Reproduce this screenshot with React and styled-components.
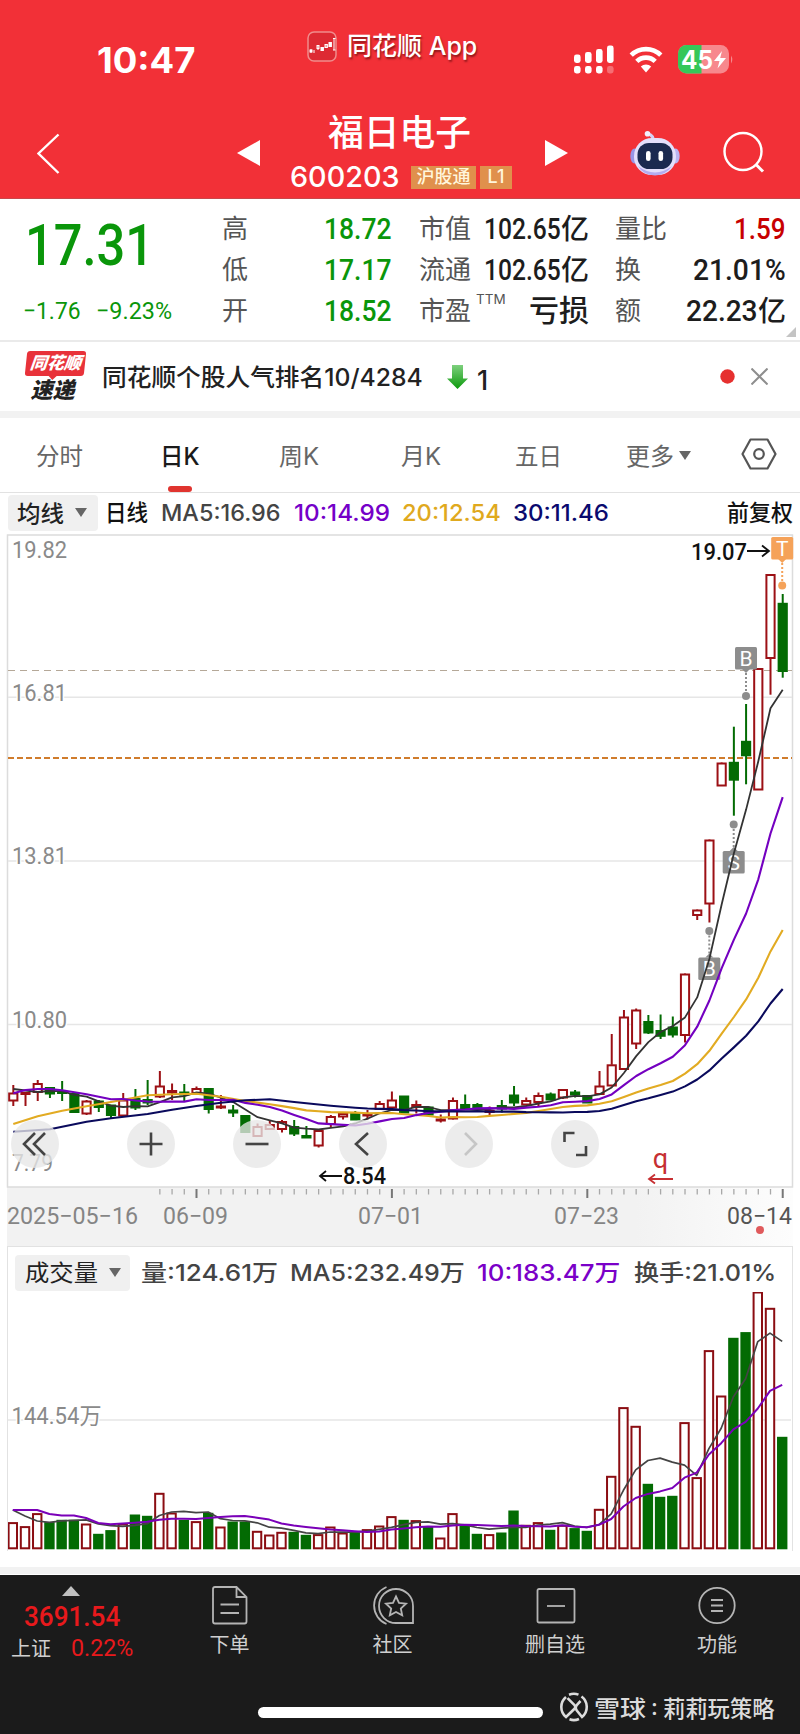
import React, { useLayoutEffect, useRef } from 'react'
import styled, { createGlobalStyle } from 'styled-components';

const CJK = `"Noto Sans CJK SC", sans-serif`;

const GlobalStyle = createGlobalStyle`
    * { box-sizing: border-box; }
    body {
        margin: 0;
        background: #fff;
        font-family: Inter, ${CJK};
    }
    svg { display: block; }
`

/* ---------- text that is squeezed to a set width, like the DIN digits ---------- */

const FitBox = styled.span`
    display: inline-block;
    width: ${p => p.$w}px;
    white-space: nowrap;
    text-align: left;
`
const FitInner = styled.span`
    display: inline-block;
    transform-origin: 0 50%;
`

function Fit({ w, children }) {
    const ref = useRef(null);
    useLayoutEffect(() => {
        ref.current.style.transform = `scaleX(${w / ref.current.offsetWidth})`;
    }, [w]);
    return <FitBox $w={w}><FitInner ref={ref}>{children}</FitInner></FitBox>
}

/* ---------- header ---------- */

const Header = styled.header`
    height: 199px;
    background: #f23037;
    border-bottom: 1px solid #c9474b;
    color: #fff;
`
const StatusBar = styled.div`
    display: grid;
    grid-template-columns: 97px 210px 267px 55px 49px 1fr;
    height: 112px;
    padding-top: 28px;
`
const Clock = styled.div`
    grid-column: 2;
    font-size: 35px;
    font-weight: 700;
    line-height: 64px;
`
const AppName = styled.div`
    display: flex;
    gap: 10px;
    height: 37px;
    align-items: center;
    font-size: 25px;
    font-weight: 500;
    line-height: 37px;
    text-shadow: 1px 2px 2px rgba(60, 0, 0, 0.55);
`
const Status = styled.div`
    padding-top: 17px;
`
const TitleBar = styled.div`
    display: grid;
    grid-template-columns: 37px 200px 53px 222px 33px 85px 49px 44px 1fr;
    height: 86px;
`
const BarItem = styled.div`
    grid-column: ${p => p.$col};
    padding-top: ${p => p.$top}px;
`
const StockName = styled.div`
    height: 43px;
    line-height: 43px;
    font-size: 36px;
    font-weight: 500;
    text-align: center;
    padding-right: 4px;
`
const StockCode = styled.div`
    display: flex;
    align-items: center;
    height: 43px;
    font-size: 29px;
    font-weight: 500;
    line-height: 43px;
`
const Badge = styled.span`
    display: flex;
    justify-content: center;
    width: ${p => p.$w}px;
    height: 23px;
    margin-left: ${p => p.$ml}px;
    margin-top: 2px;
    background: #e0904c;
    color: #fff6dc;
    font: 500 18px/22px Inter, ${CJK};
`

/* ---------- quote ---------- */

const Quote = styled.section`
    display: grid;
    grid-template-columns: 23px 199px 170px 27px 170px 26px 171px 14px;
    height: 143px;
    border-bottom: 2px solid #eaeaea;
    position: relative;
`
const PriceBox = styled.div`
    grid-column: 2;
    color: #0a960a;
    font-family: Roboto, ${CJK};
    font-weight: 500;
`
const Price = styled.div`
    font-size: 58px;
    line-height: 60px;
    height: 68px;
    padding: 16px 0 0 2px;
`
const Change = styled.div`
    display: flex;
    gap: 15px;
    margin-top: 27px;
    font-size: 24px;
    line-height: 34px;
    font-weight: 450;
`
const Column = styled.div`
    grid-column: ${p => p.$col};
    padding-top: 9px;
`
const Line = styled.div`
    display: flex;
    justify-content: space-between;
    height: 41px;
    line-height: 41px;
    font-size: 26px;
    color: #555;
`
const Label = styled.span`
    display: flex;
    sup {
        font-size: 13.5px;
        line-height: 18px;
        margin: 0 0 0 5px;
    }
`
const Value = styled.span`
    font: 500 ${p => p.$size || 30}px/41px Roboto, ${CJK};
    color: ${p => p.$color || '#1d1d1d'};
    i {
        font-style: normal;
        font-size: 28px;
    }
`
const Corner = styled.i`
    position: absolute;
    right: 4px;
    bottom: 3px;
    border-left: 10px solid transparent;
    border-bottom: 10px solid #c4c4c4;
`

/* ---------- news strip ---------- */

const News = styled.section`
    display: grid;
    grid-template-columns: 24px 78px 345px 30px 243px 31px 1fr;
    align-items: center;
    height: 76px;
    border-bottom: 7px solid #f2f2f2;
    font-size: 24px;
    color: #222;
`
const Headline = styled.div`
    padding-bottom: 3px;
    font-weight: 450;
`
const Rank = styled.span`
    padding-top: 7px;
    font-size: 27px;
    font-weight: 500;
`
const Logo = styled.div`
    grid-column: 2;
    width: 61px;
    text-align: center;
    font-weight: 900;
    font-style: italic;
    line-height: 26px;
`
const LogoTop = styled.div`
    height: 25px;
    margin-left: 2px;
    background: #e8323a;
    border-radius: 3px;
    transform: skewX(-6deg);
    color: #fff;
    font-size: 17px;
    line-height: 24px;
    position: relative;
    &:after {
        content: '';
        position: absolute;
        left: 24px;
        top: 25px;
        border: 4px solid transparent;
        border-top-color: #e8323a;
    }
`
const LogoBottom = styled.div`
    color: #222;
    font-size: 22px;
    line-height: 28px;
    height: 26px;
    padding-right: 4px;
`

/* ---------- tabs ---------- */

const Tabs = styled.nav`
    display: grid;
    grid-template-columns: 36px 124px 119px 122px 114px 111px 115px 1fr;
    height: 75px;
    border-bottom: 1px solid #e2e2e2;
`
const Tab = styled.div`
    display: flex;
    align-items: center;
    position: relative;
    grid-column: ${p => p.$col};
    padding-bottom: 2px;
    font-size: 24px;
    font-weight: ${p => p.$active ? 500 : 400};
    color: ${p => p.$active ? '#1a1a1a' : '#666'};
    &:after {
        content: '';
        display: ${p => p.$active ? 'block' : 'none'};
        position: absolute;
        left: 8px;
        bottom: 0;
        width: 24px;
        height: 6px;
        border-radius: 3px;
        background: #e0342f;
    }
`
const Caret = styled.i`
    border: ${p => p.$s || 6}px solid transparent;
    border-top: 9px solid #666;
    border-bottom: 0;
    margin-left: ${p => p.$ml || 0}px;
    margin-top: 2px;
`

/* ---------- indicator rows ---------- */

const Indicators = styled.div`
    display: flex;
    align-items: center;
    height: 41px;
    padding: 0 0 1px 8px;
    font-size: 23px;
    font-weight: 500;
`
const Select = styled.div`
    display: flex;
    align-items: center;
    width: ${p => p.$w}px;
    height: 36px;
    padding: 0 0 3px ${p => p.$pl}px;
    background: #f0f0f0;
    border-radius: 4px;
    color: #222;
    font-size: 23px;
`
const Ind = styled.span`
    margin-left: ${p => p.$ml}px;
    color: ${p => p.$color || '#444'};
    font-weight: ${p => p.$bold ? 500 : 450};
    line-height: 34px;
`

/* ---------- charts ---------- */

const KChart = styled.section`
    position: relative;
    height: 712px;
`
const AxisText = styled.text`
    font: ${p => p.$weight || 400} ${p => p.$size || 23}px Roboto, ${CJK};
    fill: ${p => p.$color || '#8a8a8a'};
`
const Controls = styled.div`
    position: absolute;
    left: 11px;
    top: 586px;
    display: flex;
    gap: 58px;
`
const Round = styled.button`
    width: 48px;
    height: 48px;
    padding: 0;
    border: 0;
    border-radius: 50%;
    background: rgba(231, 231, 231, 0.78);
    &:first-child { margin-right: 10px; }
    path {
        fill: none;
        stroke: ${p => p.$off ? '#c6c6c6' : '#444'};
        stroke-width: 2.6;
    }
`
const VolumePanel = styled.section`
    height: 321px;
    margin: 0 7px;
`
const VolumeFrame = styled.div`
    height: 305px;
    border: 1.5px solid #e2e2e2;
    border-bottom: 0;
`
const VolumeHead = styled.div`
    display: flex;
    align-items: center;
    height: 45px;
    padding: 6px 0 0 7px;
    font-size: 23px;
`

/* ---------- bottom bar ---------- */

const Strip = styled.div`
    height: 8px;
    background: #f2f2f2;
    border-bottom: 1px solid #fff;
`
const Bottom = styled.footer`
    height: 159px;
    background: #1b1b1b;
    color: #d0d0d0;
`
const Nav = styled.div`
    display: grid;
    grid-template-columns: 150px 159px 167px 158px 166px;
    height: 110px;
`
const NavItem = styled.div`
    display: flex;
    flex-direction: column;
    align-items: center;
    padding-top: 10px;
    font-size: 20px;
    line-height: 30px;
    svg { margin-bottom: 4px; }
`
const Index = styled.div`
    padding: 11px 0 0 11px;
    color: #e8191c;
    font-family: Roboto, ${CJK};
    font-weight: 500;
`
const IndexValue = styled.div`
    padding-left: 13px;
    font-size: 28px;
    line-height: 41px;
    height: 40px;
`
const IndexRow = styled.div`
    display: flex;
    gap: 20px;
    align-items: center;
    height: 24px;
    font-size: 24px;
    font-weight: 400;
    b {
        font: 400 20px/24px ${CJK};
        color: #d0d0d0;
    }
`
const UpMark = styled.div`
    width: 0;
    margin-left: 51px;
    border: 9px solid transparent;
    border-bottom: 10px solid #c0c0c0;
    border-top: 0;
`
const Foot = styled.div`
    display: flex;
    align-items: center;
    height: 40px;
    padding-left: 258px;
    font-size: 22.5px;
    font-weight: 500;
    color: #dcdcdc;
`
const HomeBar = styled.div`
    width: 285px;
    height: 11px;
    margin-right: 16px;
    margin-top: 15px;
    border-radius: 6px;
    background: #fff;
`
const Mark = styled.div`
    display: flex;
    align-items: center;
    gap: 5px;
    padding-top: 3px;
`

/* ---------- data ---------- */

const STEP = 12.213;
const X0 = 13.3;
const px = i => X0 + STEP * i;

// up, high, low, body top, body bottom, volume (all in chart pixels)
const days = [
    [1, 555, 576, 563, 570.5, 26.7],
    [1, 562, 576, 562.5, 564, 22.7],
    [1, 550, 571, 553.5, 562, 35.7],
    [0, 557, 568, 557.5, 563.5, 26.7],
    [0, 551, 571, 561.5, 563, 29],
    [0, 563, 582, 563.5, 582, 29],
    [1, 570, 585, 571, 583.5, 25.3],
    [0, 570, 582, 571, 577, 15],
    [0, 575, 588.5, 575, 585, 18.7],
    [1, 563, 586.5, 570, 585.5, 25.3],
    [0, 559, 580, 568.5, 577.5, 34.3],
    [0, 550, 575, 569.5, 572.5, 33],
    [1, 541, 568, 556, 566.5, 56],
    [1, 553.5, 570, 560.5, 562.5, 36.3],
    [0, 554, 571.5, 562, 564.5, 29],
    [1, 556.5, 563.5, 558.5, 563, 27.7],
    [0, 558, 583.5, 558.5, 579, 36],
    [1, 565, 579, 576, 577.5, 22.3],
    [0, 575, 587, 580, 582.5, 27.3],
    [0, 585.5, 603, 585.5, 602, 27.3],
    [1, 593.5, 606.5, 596.5, 606, 18],
    [1, 590.5, 600, 594.5, 599, 14.3],
    [1, 590, 602.5, 591.5, 599, 17],
    [0, 590, 606, 596.5, 603.5, 17],
    [0, 596, 608, 605.5, 607.5, 14],
    [1, 599, 617.5, 600.5, 615.5, 14.7],
    [1, 585, 597.5, 586.5, 594, 22.3],
    [1, 582.5, 589.5, 583.5, 586.5, 16.3],
    [0, 581, 589.5, 583.5, 589.5, 16.7],
    [1, 580, 589.5, 583.5, 585.5, 19.7],
    [1, 571, 580, 573.5, 579, 23.3],
    [1, 561.5, 579.5, 570, 577.5, 32.7],
    [0, 566, 582.5, 566, 582.5, 29],
    [1, 570.5, 583.5, 574.5, 577, 28.7],
    [0, 576.5, 584.5, 577, 584.5, 22.3],
    [1, 584.5, 592.5, 589, 590.5, 11.3],
    [1, 567.5, 589.5, 570.5, 588.5, 35.7],
    [0, 564.5, 580, 574.5, 578, 23],
    [0, 573, 580, 574.5, 578, 15],
    [1, 576.5, 585.5, 580.5, 582, 14.7],
    [0, 570, 582.5, 575.5, 578.5, 16.3],
    [0, 556, 576, 565, 572.5, 38.3],
    [1, 567.5, 575.5, 570.5, 574.5, 24],
    [1, 562.5, 576, 565.5, 572, 26.7],
    [0, 562.5, 570.5, 564, 569.5, 19],
    [1, 559, 569, 559.5, 567.5, 24],
    [0, 560, 567.5, 562, 564.5, 20.7],
    [0, 565.5, 573, 565.5, 572.5, 18],
    [1, 541, 565, 556, 564, 40],
    [1, 504, 556.5, 534.8, 555.5, 73],
    [1, 480, 540, 487, 539, 141.7],
    [1, 478.5, 519, 480, 513.5, 123],
    [0, 485, 504, 491.5, 502.5, 65],
    [0, 484.5, 509, 500.5, 505.8, 52],
    [0, 486.5, 507.5, 497, 504.5, 53],
    [1, 443.5, 512.5, 444, 505, 126.7],
    [1, 379.5, 390, 380, 385, 71.7],
    [1, 309.5, 392.5, 310, 373.5, 198.7],
    [1, 232.5, 256, 233, 255.5, 153.3],
    [0, 196.7, 285.7, 232.3, 249.7, 211],
    [0, 174, 254.3, 211.3, 225.3, 216.7],
    [1, 138, 260, 138.5, 259.5, 257.3],
    [1, 44, 164.7, 44.5, 128, 241],
    [0, 64, 147.7, 73.3, 141, 112],
];

const closes = days.map(d => d[0] ? d[3] : d[4]);
const volumes = days.map(d => 303 - d[5]);

// the first points come from before the visible range, the rest are averages
function average(values, n, lead) {
    const pts = lead.map(([i, y]) => [px(i), y]);
    for (let i = n - 1; i < values.length; i++) {
        let sum = 0;
        for (let k = 0; k < n; k++) sum += values[i - k];
        pts.push([px(i), sum / n]);
    }
    return pts.map(p => p[0].toFixed(1) + ',' + p[1].toFixed(1)).join(' ');
}

const seq = list => list.map((y, i) => [i, y]);

const ma5 = average(closes, 5, seq([559, 560.5, 562, 561]));
const ma10 = average(closes, 10, seq([563.3, 560, 559, 559, 560.3, 562.3, 564.3, 566.7, 569.3]));
const ma20 = average(closes, 20, [[0, 594], [2, 586.3], [4, 580.7], [6, 576.3], [8, 572], [11, 565.3], [13, 564.3], [15, 563.7], [17, 566.7]]);
const ma30 = average(closes, 30, [[0, 601.7], [3, 599.3], [6, 591.7], [8, 588.3], [11, 584], [13, 579.7], [15, 576], [17, 572.7], [19, 570.3], [21, 569.3], [23, 572], [26, 575.7], [28, 577.7]]);
const vol5 = average(volumes, 5, seq([264, 270, 275, 276.3]));
const vol10 = average(volumes, 10, seq([264, 264, 264, 268, 269.5, 269.5, 272, 277, 278.3]));

const RED = '#8b0d12';
const GREEN = '#036b03';

function Candle({ i, day }) {
    const [up, high, low, top, bottom] = day;
    const x = px(i);
    const color = up ? '#9c1015' : GREEN;
    return (
        <g stroke={color} strokeWidth="2">
            {high < top && <path d={`M${x} ${high}V${top}`} />}
            {low > bottom && <path d={`M${x} ${bottom}V${low}`} />}
            <rect x={x - 4.1} y={top + 0.5} width="8.2" height={Math.max(bottom - top - 0.5, 1)} fill={up ? '#fff' : color} />
        </g>
    )
}

function Marker({ x, y, dot, letter, color = '#8d8d8d' }) {
    const from = dot > y ? y + 22 : y;
    return (
        <g>
            <path d={`M${x} ${from}V${dot}`} stroke={color} strokeWidth="2" strokeDasharray="2 2" />
            <circle cx={x} cy={dot} r="4" fill={color} />
            <rect x={x - 11} y={y} width="22" height="22.5" rx="1.5" fill={color} />
            <path d={dot > y ? `M${x - 4} ${y + 22}h8l-4 4z` : `M${x - 4} ${y}h8l-4 -4z`} fill={color} />
            <AxisText x={x} y={y + 18.5} $size={21} $color="#fff" textAnchor="middle">{letter}</AxisText>
        </g>
    )
}

const prices = [['19.82', 27.5], ['16.81', 170.5], ['13.81', 334], ['10.80', 497.5], ['7.79', 641]];
const dates = [['2025-05-16', 7, 131], ['06-09', 163, 65], ['07-01', 358, 65], ['07-23', 554, 65], ['08-14', 727, 65]];

function CandleChart() {
    return (
        <svg width="800" height="712" viewBox="0 4 800 712">
            <defs>
                <linearGradient id="fade">
                    <stop offset="0.8" stopColor="#f2f2f2" />
                    <stop offset="1" stopColor="#fdfdfd" />
                </linearGradient>
            </defs>
            <rect x="7" y="657" width="786" height="59" fill="url(#fade)" />
            <path d="M7.5 657V5H792.5V657Z" fill="#fff" stroke="#dcdcdc" strokeWidth="1.5" />
            <path d="M8 167.3H792M8 331H792M8 494.5H792" stroke="#e6e6e6" strokeWidth="1.5" />
            <path d="M8 140.5H792" stroke="#b5a898" strokeWidth="1.2" strokeDasharray="7 5" />
            <path d="M8 228H792" stroke="#d07c2c" strokeWidth="2" strokeDasharray="6 3" />
            {prices.map(([t, y]) => (
                <AxisText key={t} x="12" y={y} textLength={t.length === 5 ? 55 : 41} lengthAdjust="spacingAndGlyphs"
                    stroke="#fff" strokeWidth="3" paintOrder="stroke">{t}</AxisText>
            ))}
            {days.map((d, i) => <Candle key={i} i={i} day={d} />)}
            <Marker x={746} y={117} dot={166} letter="B" />
            <Marker x={733.7} y={321} dot={294.5} letter="S" />
            <Marker x={709.3} y={427.5} dot={401} letter="B" />
            <Marker x={782.2} y={7} dot={55.5} letter="T" color="#f5a259" />
            <g fill="none" strokeWidth="2.1" strokeLinejoin="round">
                <polyline points={ma5} stroke="#333" strokeWidth="1.8" />
                <polyline points={ma20} stroke="#e2ab22" />
                <polyline points={ma10} stroke="#7400c0" />
                <polyline points={ma30} stroke="#0a0a5c" />
            </g>
            <AxisText x="691" y="30" $color="#111" $weight={500} textLength="56" lengthAdjust="spacingAndGlyphs">19.07</AxisText>
            <path d="M747 21H769M762 15.5L769 21L762 26.5" fill="none" stroke="#111" strokeWidth="1.8" />
            <AxisText x="343" y="654" $color="#111" $weight={500} textLength="43" lengthAdjust="spacingAndGlyphs">8.54</AxisText>
            <path d="M342 646H320M326 641L320 646L326 651" fill="none" stroke="#111" strokeWidth="1.8" />
            <AxisText x="660.5" y="638" $size={27} $color="#c62f32" textAnchor="middle">q</AxisText>
            <path d="M673 649H649M655 644.5L649 649L655 653.5" fill="none" stroke="#c62f32" strokeWidth="1.8" />
            {days.map((d, i) => {
                const major = i % 16 === 15;
                return i > 11 ? (
                    <path key={i} d={`M${px(i)} 659v${major ? 9 : 5.5}`} stroke={major ? '#777' : '#a8a8a8'} strokeWidth={major ? 2 : 1.3} />
                ) : null
            })}
            {dates.map(([t, x, w]) => (
                <AxisText key={t} x={x} y="693.5" textLength={w} lengthAdjust="spacingAndGlyphs"
                    $color={x > 700 ? '#555' : '#858585'}>{t.replaceAll('-', '−')}</AxisText>
            ))}
            <circle cx="760" cy="700" r="4" fill="#e05a5c" />
        </svg>
    )
}

function VolumeChart() {
    return (
        <svg width="783" height="258" viewBox="8.5 46 783 258">
            <path d="M8 174H792" stroke="#e6e6e6" strokeWidth="1.5" />
            <AxisText x="12" y="177.5" textLength="90" lengthAdjust="spacingAndGlyphs"
                stroke="#fff" strokeWidth="3" paintOrder="stroke">144.54万</AxisText>
            {days.map((d, i) => (
                <rect key={i} x={px(i) - 4.2} y={303.8 - d[5]} width="8.4" height={d[5] - 1.5}
                    fill={d[0] ? '#fff' : GREEN} stroke={d[0] ? RED : GREEN} strokeWidth="2" />
            ))}
            <g fill="none" strokeLinejoin="round">
                <polyline points={vol5} stroke="#444" strokeWidth="1.7" />
                <polyline points={vol10} stroke="#7a00b8" strokeWidth="2" />
            </g>
        </svg>
    )
}

const buttons = [
    ['M24 13L13 24L24 35M34 13L23 24L34 35'],
    ['M12.5 24H35.5M24 12.5V35.5'],
    ['M12.5 24H35.5'],
    ['M29 13L17 24L29 35'],
    ['M20 13L31 24L20 35', true],
    ['M13.5 22V13H23.5M35 26V35H25'],
];

/* ---------- icons ---------- */

const AppIcon = () => (
    <svg width="30" height="31" viewBox="0 0 30 31">
        <rect x="1" y="1" width="28" height="29" rx="6" fill="#dd2a33" stroke="#f08c8c" strokeWidth="1.5" />
        <g stroke="#fff" strokeWidth="1" fill="none">
            <path d="M4 18v4M7 19v3M11 15v4M15 16v4M19 13v4M23 12v4M27 8v11" />
            <rect x="3" y="19" width="2" height="2" fill="#fff" />
            <rect x="10" y="14.5" width="2" height="3" />
            <rect x="14" y="16.5" width="2.4" height="3" fill="#fff" />
            <rect x="18" y="13.5" width="2.4" height="3" />
            <rect x="22" y="11.5" width="2.4" height="4" fill="#fff" />
            <path d="M26 7.5h2.5M26 19h2.5" />
        </g>
    </svg>
)

const Signal = () => (
    <svg width="40" height="30" viewBox="0 0 40 30" fill="#fff">
        {[9.5, 7, 4, 0.5].map((y, i) => <rect key={y} x={i * 11} y={y} width="6.6" height={18 - y} rx="2.4" />)}
        {[0, 1, 2, 3].map(i => <rect key={i} x={i * 11} y="21" width="6.6" height="7.5" rx="2.4" opacity={i === 3 ? 0.3 : 1} />)}
    </svg>
)

const Wifi = () => (
    <svg width="34" height="28" viewBox="0 0 34 28" fill="none" stroke="#fff" strokeWidth="4.6">
        <path d="M2.2 10.2a21 21 0 0 1 29.6 0M7.8 16.4a13 13 0 0 1 18.4 0" />
        <path d="M17 27.5L11.8 21.6a7.6 7.6 0 0 1 10.4 0Z" fill="#fff" stroke="none" />
    </svg>
)

const Battery = () => (
    <svg width="56" height="30" viewBox="0 0 56 30">
        <clipPath id="cell"><rect width="51" height="28.5" rx="8.5" /></clipPath>
        <g clipPath="url(#cell)">
            <rect width="51" height="29" fill="#f7888d" />
            <rect width="23.5" height="29" fill="#35c759" />
        </g>
        <path d="M53 10.5q2.5 4 0 8z" fill="#f7888d" />
        <text x="3" y="24" fontFamily="Inter" fontSize="25" fontWeight="700" fill="#fff" textLength="32" lengthAdjust="spacingAndGlyphs">45</text>
        <path d="M44 6L36 16h5.5L39.5 23.5L48 13h-5.8z" fill="#fff" />
    </svg>
)

const Robot = () => (
    <svg width="50" height="48" viewBox="0 0 50 48">
        <path d="M23 12C24 7 22 5 18 4" fill="none" stroke="#d5d0f5" strokeWidth="3" />
        <circle cx="17.5" cy="3.8" r="2.8" fill="#f2efff" />
        <ellipse cx="4.5" cy="26" rx="4.2" ry="7.5" fill="#9895e6" />
        <ellipse cx="45.5" cy="26" rx="4.2" ry="7.5" fill="#b9b4f2" />
        <rect x="4" y="8" width="42" height="37" rx="18" fill="#e3dffb" />
        <path d="M8 36Q25 49 42 36Q36 45 25 45.5Q13 45 8 36Z" fill="#b3acf0" />
        <rect x="7.5" y="13" width="35" height="26" rx="11.5" fill="#1b2a50" />
        <rect x="16" y="21" width="4.6" height="10" rx="2.3" fill="#fff" />
        <rect x="28.5" y="21" width="4.6" height="10" rx="2.3" fill="#fff" />
    </svg>
)

const Snowball = () => (
    <svg width="30" height="30" viewBox="0 0 30 30" fill="none" stroke="#dcdcdc" strokeWidth="2.6">
        <path d="M7 5A13 13 0 0 0 7 25L15.5 16.8Q17.2 15 15.5 13.2L8.5 6.2" />
        <path d="M22.5 4.5A13 13 0 0 1 23 25L18 18.8Q15.5 15.5 18 12.8L21.5 9" />
        <path d="M10 2.7A13 13 0 0 1 19.5 2.6M10.5 27.3A13 13 0 0 0 20 27" />
    </svg>
)

const NavIcon = ({ children }) => (
    <svg width="44" height="41" viewBox="0 0 44 41" fill="none" stroke="#b4b4b4" strokeWidth="1.8">{children}</svg>
)

function App() {
    return (
        <>
            <GlobalStyle />
            <Header>
                <StatusBar>
                    <Clock><Fit w={98}>10:47</Fit></Clock>
                    <AppName><AppIcon /><Fit w={130}>同花顺 App</Fit></AppName>
                    <Status><Signal /></Status>
                    <Status><Wifi /></Status>
                    <Status><Battery /></Status>
                </StatusBar>
                <TitleBar>
                    <BarItem $col={2} $top={21}>
                        <svg width="24" height="42" fill="none" stroke="#fff" strokeWidth="2.4"><path d="M21.5 1.5L1.5 20.5L21.5 40" /></svg>
                    </BarItem>
                    <BarItem $col={3} $top={28}>
                        <svg width="24" height="27" fill="#fff"><path d="M0 13L23 0V26Z" /></svg>
                    </BarItem>
                    <BarItem $col={4} $top={0}>
                        <StockName><Fit w={143}>福日电子</Fit></StockName>
                        <StockCode>
                            <Fit w={109}>600203</Fit>
                            <Badge $w={65} $ml={12}>沪股通</Badge>
                            <Badge $w={32} $ml={4}>L1</Badge>
                        </StockCode>
                    </BarItem>
                    <BarItem $col={6} $top={28}>
                        <svg width="24" height="27" fill="#fff"><path d="M23 13L0 0V26Z" /></svg>
                    </BarItem>
                    <BarItem $col={7} $top={18}><Robot /></BarItem>
                    <BarItem $col={9} $top={19}>
                        <svg width="44" height="44" fill="none" stroke="#fff" strokeWidth="2.4"><circle cx="20" cy="20.5" r="18.5" /><path d="M33 33.5L40 40.5" strokeWidth="3" /></svg>
                    </BarItem>
                </TitleBar>
            </Header>

            <Quote>
                <PriceBox>
                    <Price><Fit w={129}>17.31</Fit></Price>
                    <Change><Fit w={58}>−1.76</Fit><Fit w={76}>−9.23%</Fit></Change>
                </PriceBox>
                <Column $col={3}>
                    <Line><Label>高</Label><Value $color="#0a960a"><Fit w={68}>18.72</Fit></Value></Line>
                    <Line><Label>低</Label><Value $color="#0a960a"><Fit w={68}>17.17</Fit></Value></Line>
                    <Line><Label>开</Label><Value $color="#0a960a"><Fit w={68}>18.52</Fit></Value></Line>
                </Column>
                <Column $col={5}>
                    <Line><Label>市值</Label><Value><Fit w={77}>102.65</Fit><i>亿</i></Value></Line>
                    <Line><Label>流通</Label><Value><Fit w={77}>102.65</Fit><i>亿</i></Value></Line>
                    <Line><Label>市盈<sup>TTM</sup></Label><Value $size={30}>亏损</Value></Line>
                </Column>
                <Column $col={7}>
                    <Line><Label>量比</Label><Value $color="#c80000"><Fit w={52}>1.59</Fit></Value></Line>
                    <Line><Label>换</Label><Value><Fit w={93}>21.01%</Fit></Value></Line>
                    <Line><Label>额</Label><Value><Fit w={72}>22.23</Fit><i>亿</i></Value></Line>
                </Column>
                <Corner />
            </Quote>

            <News>
                <Logo>
                    <LogoTop>同花顺</LogoTop>
                    <LogoBottom>速递</LogoBottom>
                </Logo>
                <Headline><Fit w={321}>同花顺个股人气排名10/4284</Fit></Headline>
                <svg width="22" height="26">
                    <linearGradient id="down" x2="0" y2="1">
                        <stop stopColor="#7ed07e" /><stop offset="1" stopColor="#0c9a0c" />
                    </linearGradient>
                    <path d="M5 1H16V14.5H21L10.5 25L0 14.5H5Z" fill="url(#down)" />
                </svg>
                <Rank>1</Rank>
                <svg width="15" height="15"><circle cx="7.5" cy="7.5" r="7.2" fill="#e6302f" /></svg>
                <svg width="17" height="17" stroke="#8e8e8e" strokeWidth="2"><path d="M0.5 0.5L16.5 16.5M16.5 0.5L0.5 16.5" /></svg>
            </News>

            <Tabs>
                <Tab $col={2}><Fit w={47}>分时</Fit></Tab>
                <Tab $col={3} $active><Fit w={40}>日K</Fit></Tab>
                <Tab $col={4}><Fit w={40}>周K</Fit></Tab>
                <Tab $col={5}><Fit w={40}>月K</Fit></Tab>
                <Tab $col={6}><Fit w={47}>五日</Fit></Tab>
                <Tab $col={7}><Fit w={48}>更多</Fit><Caret $ml={5} $s={6.5} /></Tab>
                <Tab $col={8}>
                    <svg width="36" height="32" fill="none" stroke="#555" strokeWidth="2.2">
                        <path d="M1.5 16L9.5 1.5H26.5L34.5 16L26.5 30.5H9.5Z" strokeLinejoin="round" />
                        <circle cx="18" cy="16" r="4.8" />
                    </svg>
                </Tab>
            </Tabs>

            <Indicators>
                <Select $w={90} $pl={9}><Fit w={47}>均线</Fit><Caret $ml={11} /></Select>
                <Ind $ml={7} $color="#111" $bold><Fit w={43}>日线</Fit></Ind>
                <Ind $ml={13}><Fit w={120}>MA5:16.96</Fit></Ind>
                <Ind $ml={13} $color="#7400c8"><Fit w={96}>10:14.99</Fit></Ind>
                <Ind $ml={12} $color="#e0a91e"><Fit w={99}>20:12.54</Fit></Ind>
                <Ind $ml={12} $color="#0a0a6e"><Fit w={96}>30:11.46</Fit></Ind>
                <Ind $ml={118} $color="#111"><Fit w={66}>前复权</Fit></Ind>
            </Indicators>

            <KChart>
                <CandleChart />
                <Controls>
                    {buttons.map(([d, off]) => (
                        <Round key={d} $off={off}><svg width="48" height="48"><path d={d} /></svg></Round>
                    ))}
                </Controls>
            </KChart>

            <VolumePanel>
                <VolumeFrame>
                    <VolumeHead>
                        <Select $w={115} $pl={10}><Fit w={73}>成交量</Fit><Caret $ml={11} /></Select>
                        <Ind $ml={11}><Fit w={137}>量:124.61万</Fit></Ind>
                        <Ind $ml={12}><Fit w={175}>MA5:232.49万</Fit></Ind>
                        <Ind $ml={12} $color="#7a00c8"><Fit w={144}>10:183.47万</Fit></Ind>
                        <Ind $ml={13}><Fit w={142}>换手:21.01%</Fit></Ind>
                    </VolumeHead>
                    <VolumeChart />
                </VolumeFrame>
            </VolumePanel>

            <Strip />
            <Bottom>
                <Nav>
                    <Index>
                        <UpMark />
                        <IndexValue><Fit w={96}>3691.54</Fit></IndexValue>
                        <IndexRow><b>上证</b><Fit w={62}>0.22%</Fit></IndexRow>
                    </Index>
                    <NavItem>
                        <NavIcon>
                            <path d="M5 4Q5 2 7 2H28.5L38.5 12V36.5Q38.5 38.5 36.5 38.5H7Q5 38.5 5 36.5ZM28.5 2V12H38.5M12.5 19.5H31M12.5 28H31" />
                        </NavIcon>
                        下单
                    </NavItem>
                    <NavItem>
                        <NavIcon>
                            <path d="M42 38H25A17 17 0 1 1 42 21ZM15.5 2A20 20 0 0 0 15.5 39" />
                            <path d="M25 11.5L28 18L35 18.7L29.8 23.5L31.2 30.3L25 27L18.8 30.3L20.2 23.5L15 18.7L22 18Z" />
                        </NavIcon>
                        社区
                    </NavItem>
                    <NavItem>
                        <NavIcon>
                            <rect x="4.5" y="4" width="37" height="33.5" rx="1.5" />
                            <path d="M14 21H32" />
                        </NavIcon>
                        删自选
                    </NavItem>
                    <NavItem>
                        <NavIcon>
                            <circle cx="22" cy="20.5" r="17.7" />
                            <path d="M16 15H28M16 20.5H28M16 26H28" />
                        </NavIcon>
                        功能
                    </NavItem>
                </Nav>
                <Foot>
                    <HomeBar />
                    <Mark><Snowball /><Fit w={52}>雪球</Fit><Fit w={7}>:</Fit><Fit w={112}>莉莉玩策略</Fit></Mark>
                </Foot>
            </Bottom>
        </>
    )
}

export default App
